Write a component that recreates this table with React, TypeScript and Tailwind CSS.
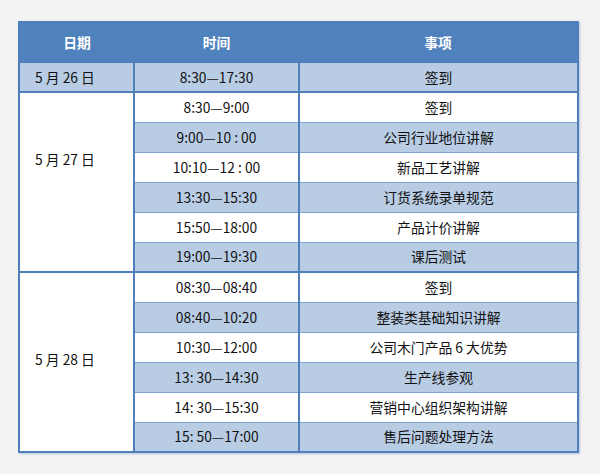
import React from "react";

type Row = { time: string; item: string };

const groups: { date: string; rows: Row[]; pad: string }[] = [
  { date: "5 月 26 日", pad: "", rows: [{ time: "8:30—17:30", item: "签到" }] },
  {
    date: "5 月 27 日",
    pad: "pb-[46px]",
    rows: [
      { time: "8:30—9:00", item: "签到" },
      { time: "9:00—10 : 00", item: "公司行业地位讲解" },
      { time: "10:10—12 : 00", item: "新品工艺讲解" },
      { time: "13:30—15:30", item: "订货系统录单规范" },
      { time: "15:50—18:00", item: "产品计价讲解" },
      { time: "19:00—19:30", item: "课后测试" },
    ],
  },
  {
    date: "5 月 28 日",
    pad: "pb-[6px]",
    rows: [
      { time: "08:30—08:40", item: "签到" },
      { time: "08:40—10:20", item: "整装类基础知识讲解" },
      { time: "10:30—12:00", item: "公司木门产品 6 大优势" },
      { time: "13: 30—14:30", item: "生产线参观" },
      { time: "14: 30—15:30", item: "营销中心组织架构讲解" },
      { time: "15: 50—17:00", item: "售后问题处理方法" },
    ],
  },
];

export default function App() {
  let idx = 0;
  return (
    <div
      className="w-[600px] h-[474px] bg-[#f3f3f3] pt-[21px] pl-[18px]"
      style={{ fontFamily: '"Noto Sans CJK SC", "Noto Sans", sans-serif' }}
    >
      <table className="w-[561px] border-collapse border-2 border-[#4f7fbb] text-[13.8px] text-[#111111] shadow-[1px_1px_2px_rgba(120,150,200,0.5)]">
        <thead>
          <tr className="h-[40px] bg-[#4f81bd] text-white font-bold">
            <th className="w-[115px] text-center font-bold">日期</th>
            <th className="w-[165px] text-center font-bold">时间</th>
            <th className="text-center font-bold">事项</th>
          </tr>
        </thead>
        <tbody>
          {groups.map((g) =>
            g.rows.map((r, i) => {
              const light = idx % 2 === 0;
              idx++;
              const bg = light ? "bg-[#b8cce4]" : "bg-white";
              return (
                <tr key={g.date + i} className="h-[30px]">
                  {i === 0 && (
                    <td
                      rowSpan={g.rows.length}
                      className={`pl-[15px] align-middle border-t-2 border-t-[#4f7fbb] border-r-2 border-r-[#4f7fbb] ${g.pad} ${
                        g.rows.length === 1 ? "bg-[#b8cce4]" : "bg-white"
                      }`}
                    >
                      {g.date}
                    </td>
                  )}
                  <td
                    className={`text-center border-r-2 border-r-[#4f7fbb] ${
                      i === 0 ? "border-t-2 border-t-[#4f7fbb]" : "border-t border-t-[#7fa2cf]"
                    } ${bg}`}
                  >
                    {r.time}
                  </td>
                  <td
                    className={`text-center ${
                      i === 0 ? "border-t-2 border-t-[#4f7fbb]" : "border-t border-t-[#7fa2cf]"
                    } ${bg}`}
                  >
                    {r.item}
                  </td>
                </tr>
              );
            })
          )}
        </tbody>
      </table>
    </div>
  );
}
